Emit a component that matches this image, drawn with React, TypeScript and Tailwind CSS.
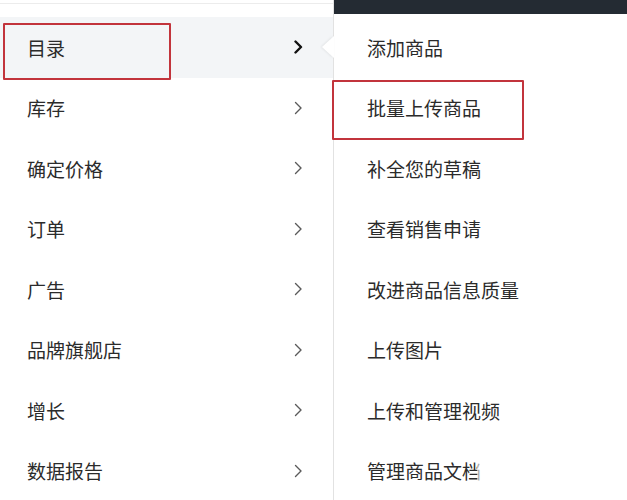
import React from "react";

const left = ["目录", "库存", "确定价格", "订单", "广告", "品牌旗舰店", "增长", "数据报告"];
const right = ["添加商品", "批量上传商品", "补全您的草稿", "查看销售申请", "改进商品信息质量", "上传图片", "上传和管理视频", "管理商品文档"];

function Chevron({ active }: { active: boolean }) {
  return (
    <svg width="10" height="14" viewBox="0 0 10 14" fill="none">
      <path
        d="M2.5 1.5 L8 7 L2.5 12.5"
        stroke={active ? "#111111" : "#5a5a5a"}
        strokeWidth={active ? 2.4 : 1.4}
        strokeLinecap="round"
        strokeLinejoin="round"
      />
    </svg>
  );
}

export default function App() {
  return (
    <div
      className="relative w-[627px] h-[500px] overflow-hidden bg-white flex text-[19px] text-[#2b2b2b]"
      style={{ fontFamily: '"Noto Sans CJK SC", "Noto Sans", sans-serif' }}
    >
      {/* left panel */}
      <div className="relative w-[334px] shrink-0 border-r border-[#e2e2e2] flex flex-col">
        <div className="h-[17px] shrink-0 pt-[3px]">
          <div className="h-px bg-[#ececec]" />
        </div>
        {left.map((t, i) => (
          <div
            key={t}
            className={`h-[60.5px] shrink-0 flex items-center justify-between pl-[27px] pr-[30px] ${
              i === 0 ? "bg-[#f3f5f7]" : ""
            }`}
          >
            <span className="leading-none">{t}</span>
            <Chevron active={i === 0} />
          </div>
        ))}
        {/* pointer triangle */}
        <div className="absolute right-[-1px] top-[36px] w-0 h-0 border-y-[11px] border-y-transparent border-r-[12px] border-r-white drop-shadow-[-1px_0_1px_rgba(0,0,0,0.08)]" />
        {/* red annotation */}
        <div className="absolute left-[3px] top-[23px] w-[168px] h-[57px] border-2 border-[#c2343c] rounded-[1px]" />
      </div>

      {/* right panel */}
      <div className="relative flex-1 flex flex-col">
        <div className="h-[14px] shrink-0 bg-[#242b33]" />
        <div className="h-[3px] shrink-0" />
        {right.map((t) => (
          <div key={t} className="h-[60.5px] shrink-0 flex items-center pl-[33px]">
            <span className="leading-none whitespace-nowrap">{t}</span>
          </div>
        ))}
        <div className="absolute left-[-2px] top-[80px] w-[192px] h-[60px] border-2 border-[#c2343c] rounded-[1px]" />
        <div className="absolute left-[143px] top-[456px] w-[150px] h-[36px] bg-gradient-to-r from-white/60 via-white/90 to-white" />
      </div>
    </div>
  );
}
